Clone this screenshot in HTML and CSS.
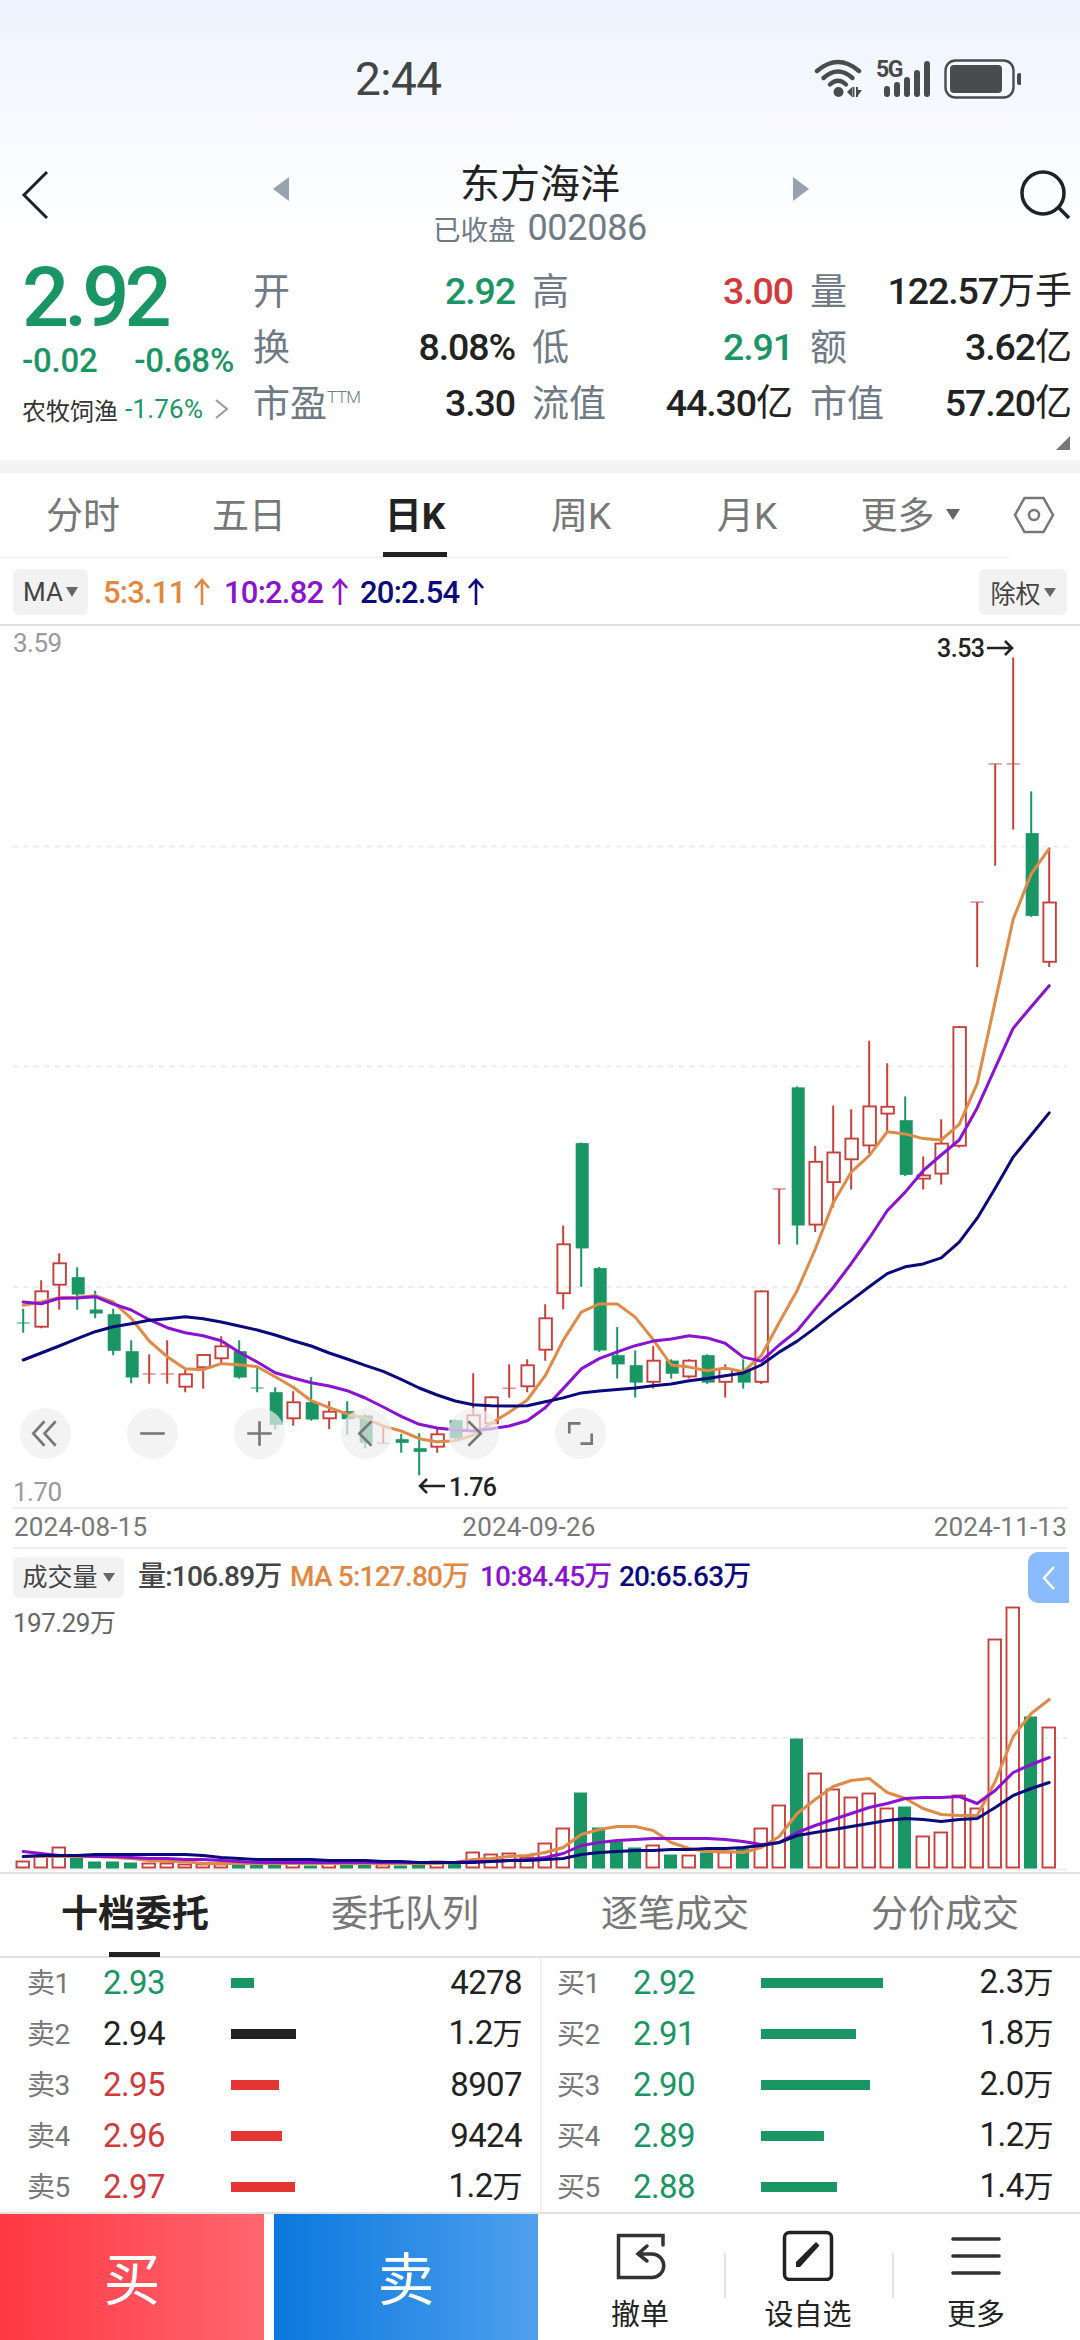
FILE: index.html
```html
<!DOCTYPE html>
<html lang="zh-CN">
<head>
  <meta charset="UTF-8">
  <meta name="viewport" content="width=device-width, initial-scale=1.0">
  <title>东方海洋 002086</title>
  <link rel="stylesheet" href="styles.css">
</head>
<body>
  <div class="top">
    <!-- Status bar -->
    <div class="status">
      <span class="time">2:44</span>
      <svg class="status-icons" width="210" height="44" viewBox="0 0 210 44">
        <g fill="none" stroke="#4a4b4c" stroke-width="4.4" stroke-linecap="round">
          <path d="M6 15Q27 -3 48 15"/>
          <path d="M12.500 22Q27 9 41.500 22"/>
          <path d="M19 28.500Q27 21 35 28.500"/>
        </g>
        <g fill="#4a4b4c">
          <circle cx="27.500" cy="36" r="5"/>
          <path d="M36 36l5-5v10zM41.500 31h2v10h-2zM45 31h2v10h-2zM45 34h6l-5 7z"/>
          <rect x="73" y="30" width="6" height="11" rx="3"/>
          <rect x="83" y="26" width="6" height="15" rx="3"/>
          <rect x="93" y="21" width="6" height="20" rx="3"/>
          <rect x="103" y="14" width="6" height="27" rx="3"/>
          <rect x="113" y="5" width="6" height="36" rx="3"/>
          <rect x="139" y="9" width="52" height="28" rx="4"/>
          <rect x="206" y="17" width="4.500" height="12" rx="2.200"/>
          <text class="net" x="65" y="21">5G</text>
        </g>
        <rect x="134.500" y="4.500" width="68" height="37" rx="10" fill="none" stroke="#4a4b4c" stroke-width="2.400"/>
      </svg>
    </div>

    <!-- Stock title -->
    <div class="header">
      <svg width="30" height="52" viewBox="0 0 30 52"><path d="M28 3L5 26l23 23" fill="none" stroke="#222" stroke-width="3"/></svg>
      <svg class="prev" width="16" height="24" viewBox="0 0 16 24"><path d="M16 0v24L0 12z" fill="#98a2ad"/></svg>
      <div class="name">
        <div class="name-main">东方海洋</div>
        <div class="name-sub">已收盘 <b>002086</b></div>
      </div>
      <svg class="next" width="16" height="24" viewBox="0 0 16 24"><path d="M0 0v24l16-12z" fill="#98a2ad"/></svg>
      <svg class="search" width="52" height="52" viewBox="0 0 52 52"><g fill="none" stroke="#222" stroke-width="3.500"><circle cx="24" cy="24" r="21"/><path d="M39 38l11 11"/></g></svg>
    </div>

    <!-- Quote -->
    <div class="quote">
      <div class="price-box">
        <div class="price">2.92</div>
        <div class="change"><span>-0.02</span><span>-0.68%</span></div>
        <div class="sector">农牧饲渔 <b>-1.76%</b><svg width="14" height="20" viewBox="0 0 14 20"><path d="M1 1l11 9-11 9" fill="none" stroke="#999" stroke-width="2"/></svg></div>
      </div>
      <div class="stats">
        <div class="stat"><span>开</span><b class="green">2.92</b></div>
        <div class="stat"><span>高</span><b class="red">3.00</b></div>
        <div class="stat"><span>量</span><b>122.57<i>万手</i></b></div>
        <div class="stat"><span>换</span><b>8.08%</b></div>
        <div class="stat"><span>低</span><b class="green">2.91</b></div>
        <div class="stat"><span>额</span><b>3.62<i>亿</i></b></div>
        <div class="stat"><span>市盈<sup>TTM</sup></span><b>3.30</b></div>
        <div class="stat"><span>流值</span><b>44.30<i>亿</i></b></div>
        <div class="stat"><span>市值</span><b>57.20<i>亿</i></b></div>
      </div>
    </div>
    <div class="corner"></div>
  </div>

  <div class="period-tabs">
    <div class="tab">分时</div>
    <div class="tab">五日</div>
    <div class="tab active">日K</div>
    <div class="tab">周K</div>
    <div class="tab">月K</div>
    <div class="tab more">更多<i class="caret"></i></div>
    <svg class="setting" width="42" height="40" viewBox="0 0 42 40"><g fill="none" stroke="#777" stroke-width="2.500"><path d="M11.500 3h19L40 20l-9.500 17h-19L2 20z"/><circle cx="21" cy="20" r="5"/></g></svg>
  </div>

  <div class="ma-bar">
    <span class="pill">MA<i class="caret"></i></span>
    <span class="ma orange">5:3.11<svg width="18" height="28" viewBox="0 0 18 28"><path d="M9 27V3M2 10l7-8 7 8"/></svg></span>
    <span class="ma purple">10:2.82<svg width="18" height="28" viewBox="0 0 18 28"><path d="M9 27V3M2 10l7-8 7 8"/></svg></span>
    <span class="ma navy">20:2.54<svg width="18" height="28" viewBox="0 0 18 28"><path d="M9 27V3M2 10l7-8 7 8"/></svg></span>
    <span class="pill right">除权<i class="caret"></i></span>
  </div>

  <div class="kline">
    <svg id="kline" width="1080" height="883"></svg>
    <div class="tools">
      <span><svg viewBox="0 0 50 50"><path d="M24 13L13 25l11 12M35 13L24 25l11 12"/></svg></span>
      <span><svg viewBox="0 0 50 50"><path d="M13 25h24"/></svg></span>
      <span><svg viewBox="0 0 50 50"><path d="M13 25h24M25 13v24"/></svg></span>
      <span><svg viewBox="0 0 50 50"><path d="M30 13L18 25l12 12"/></svg></span>
      <span><svg viewBox="0 0 50 50"><path d="M20 13l12 12-12 12"/></svg></span>
      <span><svg viewBox="0 0 50 50"><path d="M14 25V15h11M25 35h11V25"/></svg></span>
    </div>
  </div>
  <div class="dates"><span>2024-08-15</span><span>2024-09-26</span><span>2024-11-13</span></div>

  <div class="vol-bar">
    <span class="pill">成交量<i class="caret"></i></span>
    <span class="v1">量:106.89万</span>
    <span class="v2 orange">MA 5:127.80万</span>
    <span class="v3 purple">10:84.45万</span>
    <span class="v4 navy">20:65.63万</span>
    <span class="drawer"><svg width="20" height="30" viewBox="0 0 20 30"><path d="M15 4L5 15l10 11" fill="none" stroke="#fff" stroke-width="2.500"/></svg></span>
  </div>
  <div class="volume"><svg id="volume" width="1080" height="269"></svg></div>

  <div class="book-tabs">
    <div class="tab active">十档委托</div>
    <div class="tab">委托队列</div>
    <div class="tab">逐笔成交</div>
    <div class="tab">分价成交</div>
  </div>

  <div class="book">
    <div class="side sell">
      <div class="row green"><span>卖1</span><em>2.93</em><i style="width:23px"></i><b>4278</b></div>
      <div class="row black"><span>卖2</span><em>2.94</em><i style="width:65px"></i><b>1.2<u>万</u></b></div>
      <div class="row red"><span>卖3</span><em>2.95</em><i style="width:48px"></i><b>8907</b></div>
      <div class="row red"><span>卖4</span><em>2.96</em><i style="width:51px"></i><b>9424</b></div>
      <div class="row red"><span>卖5</span><em>2.97</em><i style="width:64px"></i><b>1.2<u>万</u></b></div>
    </div>
    <div class="side buy">
      <div class="row green"><span>买1</span><em>2.92</em><i style="width:122px"></i><b>2.3<u>万</u></b></div>
      <div class="row green"><span>买2</span><em>2.91</em><i style="width:95px"></i><b>1.8<u>万</u></b></div>
      <div class="row green"><span>买3</span><em>2.90</em><i style="width:109px"></i><b>2.0<u>万</u></b></div>
      <div class="row green"><span>买4</span><em>2.89</em><i style="width:63px"></i><b>1.2<u>万</u></b></div>
      <div class="row green"><span>买5</span><em>2.88</em><i style="width:76px"></i><b>1.4<u>万</u></b></div>
    </div>
  </div>

  <div class="bottom">
    <button class="btn-buy">买</button>
    <button class="btn-sell">卖</button>
    <div class="actions">
      <div class="action">
        <svg width="52" height="52" viewBox="0 0 52 52"><path d="M49 16V6.500H4.500v42H38a11.500 11.500 0 0 0 0-23.500H24M33 17l-9 8 9 7" fill="none" stroke="#333" stroke-width="3.500" stroke-linecap="round"/></svg>
        撤单
      </div>
      <div class="action">
        <svg width="52" height="52" viewBox="0 0 52 52"><rect x="2.500" y="3.500" width="47" height="47" rx="5" fill="none" stroke="#222" stroke-width="3.500"/><path d="M14 38v-5l20-20 3.500 3.500L18 38z" fill="#222"/></svg>
        设自选
      </div>
      <div class="action">
        <svg width="52" height="52" viewBox="0 0 52 52"><path d="M3 10h46M3 27h46M3 44h46" fill="none" stroke="#333" stroke-width="3.600" stroke-linecap="round"/></svg>
        更多
      </div>
    </div>
  </div>

  <script src="chart.js"></script>
</body>
</html>
```

FILE: styles.css
```css
* {
  box-sizing: border-box;
}

body {
  margin: 0;
  width: 1080px;
  height: 2340px;
  overflow: hidden;
  background: #fff;
  color: #222;
  font-family: Roboto, "Noto Sans CJK SC", sans-serif;
}

b, i, em, u {
  font-style: normal;
  font-weight: inherit;
  text-decoration: none;
}

svg {
  display: block;
  flex: none;
}

.green { color: #1a9564; }
.red { color: #d23a3a; }
.orange { color: #e2873f; }
.purple { color: #8a12d0; }
.navy { color: #0a0a7c; }

.caret {
  display: inline-block;
  border: 6px solid transparent;
  border-top: 10px solid #666;
  border-bottom: 0;
}

/* ---------- top ---------- */
.top {
  height: 460px;
  background: linear-gradient(#edf4ff 0, #f6f9ff 110px, #fff 240px);
}

.status {
  height: 150px;
  padding: 56px 59px 0 355px;
  display: flex;
  justify-content: space-between;
}

.time {
  font-size: 46px;
  line-height: 46px;
  letter-spacing: -0.5px;
  color: #444;
}

.net {
  font-size: 23px;
  font-weight: 700;
  letter-spacing: -1.5px;
}

.header {
  height: 104px;
  padding: 0 9px 0 19px;
  display: flex;
  align-items: flex-start;
}

.header > svg:first-child { margin-top: 19px; }
.header .prev { margin: 27px 0 0 224px; }
.header .next { margin: 27px 0 0 0; }
.header .search { margin: 19px 0 0 210px; }

.name {
  width: 504px;
  padding: 11px 2px 0 0;
  text-align: center;
}

.name-main {
  font-size: 40px;
  line-height: 48px;
}

.name-sub {
  display: flex;
  justify-content: center;
  align-items: center;
  gap: 12px;
  height: 38px;
  font-size: 27.5px;
  color: #6f7a86;
}

.name-sub b {
  font-size: 36px;
  letter-spacing: -0.3px;
}

.quote {
  display: flex;
}

.price-box {
  width: 232px;
  padding-left: 22px;
  color: #1a9564;
}

.price {
  margin-top: 3px;
  height: 82px;
  line-height: 82px;
  font-size: 83px;
  font-weight: 500;
  letter-spacing: -5px;
}

.change {
  display: flex;
  justify-content: space-between;
  margin-top: 2px;
  height: 40px;
  line-height: 40px;
  font-size: 33px;
  font-weight: 500;
  letter-spacing: -0.2px;
  margin-right: -2px;
}

.sector {
  display: flex;
  align-items: center;
  margin-top: 10px;
  height: 36px;
  font-size: 24px;
  color: #333;
  white-space: nowrap;
}

.sector b {
  margin: 0 12px 0 7px;
  font-size: 26px;
  letter-spacing: 0.2px;
  color: #1a9564;
}

.stats {
  width: 818px;
  margin-left: 21px;
  padding-top: 9px;
  display: grid;
  grid-template-columns: 262px 261px 262px;
  column-gap: 17px;
  grid-auto-rows: 56px;
}

.stat {
  display: flex;
  justify-content: space-between;
  align-items: center;
  font-size: 37px;
  line-height: 56px;
  white-space: nowrap;
}

.stat span {
  position: relative;
  top: 2px;
  color: #6f7a86;
}

.stat sup {
  font-size: 17px;
  font-weight: 300;
  line-height: 1;
  letter-spacing: -0.6px;
  vertical-align: 14px;
}

.stat b {
  font-size: 37.5px;
  font-weight: 500;
  letter-spacing: -1.1px;
}

.stat i {
  font-size: 37px;
  font-weight: 400;
  letter-spacing: 0;
}

.corner {
  margin: 5px 10px 0 auto;
  width: 0;
  border-left: 14px solid transparent;
  border-bottom: 14px solid #777;
}

/* ---------- period tabs ---------- */
.period-tabs {
  height: 98px;
  border-top: 13px solid #f4f4f4;
  display: flex;
  background: linear-gradient(#eee, #eee) 0 84px / 1009px 2px no-repeat;
}

.tab {
  position: relative;
  width: 166px;
  line-height: 87px;
  text-align: center;
  font-size: 37px;
  color: #777;
}

.tab.active {
  color: #222;
  font-weight: 700;
}

.tab.active::after {
  content: "";
  position: absolute;
  left: 50%;
  bottom: 0;
  width: 64px;
  height: 5px;
  margin-left: -32px;
  background: #222;
}

.period-tabs .tab {
  height: 84px;
}

.tab.more {
  width: 160px;
}

.tab.more .caret {
  border-width: 11px 7px 0;
  margin-left: 11px;
  vertical-align: 9px;
}

.setting {
  margin: 22px 0 0 23px;
}

/* ---------- indicator bar ---------- */
.ma-bar {
  height: 68px;
  padding: 11px 13px 0;
  display: flex;
  border-bottom: 2px solid #e0e0e0;
}

.pill {
  display: flex;
  align-items: center;
  justify-content: center;
  gap: 3px;
  width: 75px;
  height: 46px;
  border-radius: 6px;
  background: #f2f2f2;
  font-size: 26px;
  color: #444;
}

.pill.right {
  width: 88px;
  margin-left: auto;
  font-size: 25px;
}

.ma {
  display: flex;
  align-items: center;
  height: 46px;
  font-size: 31px;
  font-weight: 500;
  letter-spacing: -0.8px;
}

.ma svg {
  margin-left: 8px;
  fill: none;
  stroke: currentColor;
  stroke-width: 2.6px;
}

.ma.orange { width: 121px; margin-left: 15px; }
.ma.purple { width: 136px; }

/* ---------- charts ---------- */
.kline {
  position: relative;
  height: 882px;
}

.tools {
  position: absolute;
  left: 20px;
  top: 782px;
  display: flex;
  gap: 56px;
}

.tools span {
  width: 51px;
  height: 51px;
  border-radius: 50%;
  background: rgba(238, 238, 238, 0.7);
}

.tools svg {
  width: 51px;
  height: 51px;
  fill: none;
  stroke: #777;
  stroke-width: 2.6px;
}

.axis {
  font-size: 26px;
  letter-spacing: -0.5px;
  fill: #999;
}

.mark {
  font-size: 25px;
  font-weight: 500;
  letter-spacing: -0.5px;
  fill: #222;
}

.axis.dark {
  fill: #666;
}

.dates {
  margin: 0 13px;
  padding: 0 0 0 1px;
  height: 41px;
  display: flex;
  justify-content: space-between;
  border-bottom: 2px solid #eee;
  font-size: 26px;
  line-height: 39px;
  letter-spacing: 0.2px;
  color: #777;
}

.dates span:nth-child(2) {
  margin-right: 23px;
}

.vol-bar {
  height: 56px;
  padding: 3px 11px 0 13px;
  display: flex;
  font-size: 28px;
  font-weight: 500;
  line-height: 42px;
  letter-spacing: -0.8px;
  white-space: nowrap;
}

.vol-bar .pill {
  width: 111px;
  height: 41px;
  margin-top: 5px;
  gap: 5px;
  font-size: 25px;
  font-weight: 400;
  letter-spacing: 0;
}

.vol-bar .pill .caret,
.pill.right .caret {
  border-width: 9px 6px 0;
}

.v1, .v2, .v3, .v4 {
  margin-top: 4px;
}

.v1 { margin-left: 14px; width: 152px; color: #444; }
.v2 { width: 190px; }
.v3 { width: 139px; }

.drawer {
  width: 41px;
  height: 51px;
  margin-left: auto;
  border-radius: 10px 0 0 10px;
  background: #8abbff;
  display: flex;
  align-items: center;
  justify-content: center;
}

.volume {
  height: 269px;
  border-bottom: 2px solid #e2e2e2;
}

/* ---------- order book ---------- */
.book-tabs {
  display: flex;
  height: 84px;
  border-bottom: 2px solid #e2e2e2;
}

.book-tabs .tab {
  width: 270px;
  height: 83px;
  line-height: 81px;
}

.book-tabs .tab.active::after {
  width: 51px;
  margin-left: -26px;
}

.book {
  display: flex;
  height: 254px;
}

.side {
  width: 540px;
  padding: 0 18px 0 27px;
}

.side.buy {
  padding: 0 27px 0 15px;
  border-left: 2px solid #f0f0f0;
}

.row {
  display: flex;
  align-items: center;
  height: 51px;
  padding-bottom: 2px;
  font-size: 33px;
  letter-spacing: -0.6px;
}

.row span {
  width: 76px;
  padding-bottom: 3px;
  font-size: 28px;
  color: #777;
}

.row em {
  width: 128px;
  font-size: 33px;
}

.row i {
  height: 10px;
  background: currentColor;
}

.row.red i { background: #e53535; }

.row b {
  margin-left: auto;
  line-height: 40px;
  color: #222;
}

.row u {
  font-size: 30px;
}

/* ---------- bottom bar ---------- */
.bottom {
  display: flex;
  height: 129px;
  border-top: 2px solid #e2e2e2;
}

.bottom button {
  width: 264px;
  padding: 0 0 5px;
  border: 0;
  color: #fff;
  font-family: inherit;
  font-size: 57px;
}

.btn-buy {
  background: linear-gradient(90deg, #ff3842, #ff6670);
}

.btn-sell {
  margin-left: 10px;
  background: linear-gradient(90deg, #0a78dd, #4fa0ee);
}

.actions {
  display: flex;
  margin-left: 18px;
}

.action {
  position: relative;
  width: 168px;
  padding-top: 15px;
  display: flex;
  flex-direction: column;
  align-items: center;
  font-size: 29px;
  line-height: 62px;
}

.action svg {
  margin-bottom: 3px;
}

.action + .action::before {
  content: "";
  position: absolute;
  left: 0;
  top: 39px;
  width: 2px;
  height: 45px;
  background: #e2e2e2;
}
```

FILE: chart.js
```js
// [color, high, body top, body bottom, low] in chart pixels
const candles = [
  ['g', 682.7, 697, 697, 706.7], ['r', 654.3, 665.3, 700.7, 702.3], ['r', 627.3, 637.3, 658.7, 683.7],
  ['g', 641.3, 651.7, 668, 683.7], ['g', 664.7, 684, 687, 692.3], ['g', 682.7, 688.7, 724.3, 729.3],
  ['g', 714.3, 725.7, 751, 757.3], ['r', 728.3, 748, 748, 757.7], ['r', 714.3, 748, 748, 757.7],
  ['r', 744, 748.3, 760.7, 766.3], ['r', 728, 729, 741.3, 762.7], ['r', 710.3, 720.3, 732.3, 737.3],
  ['g', 714.3, 725.7, 751, 752.7], ['g', 741.3, 762, 762, 766.3], ['g', 761.3, 766.7, 798.3, 803.3],
  ['r', 765.3, 776.3, 792.3, 799.7], ['g', 751, 776.7, 793, 794.7], ['r', 775.3, 785.7, 792.3, 803.3],
  ['g', 775.3, 785.7, 792.7, 808.7], ['g', 788.3, 790, 816.3, 822.3], ['r', 800.7, 817.3, 817.3, 817.3],
  ['g', 808, 813.7, 816.3, 826.7], ['g', 807.3, 822.7, 825.3, 849.3], ['r', 802.3, 808.3, 820.7, 826.7],
  ['g', 793.3, 794.7, 811.7, 812.7], ['r', 747.3, 789.3, 805, 806.3], ['r', 770.3, 771.3, 797.3, 798.3],
  ['r', 738.3, 762.3, 762.3, 771.7], ['r', 733.3, 739.3, 760.3, 766.3], ['r', 678.3, 692.3, 723.7, 734.7],
  ['r', 599.4, 618.3, 667.2, 683.3], ['g', 516.5, 517.6, 621.9, 660.8], ['g', 641.1, 642.6, 724, 725.8],
  ['g', 701.1, 729.7, 737.9, 752.6], ['g', 724.4, 739.7, 756.1, 771.5], ['r', 719.7, 734.7, 755.8, 762.6],
  ['g', 733.3, 735.1, 747.2, 752.6], ['r', 733.3, 734.7, 750.4, 752.6], ['g', 728.3, 729.7, 756.1, 757.9],
  ['r', 738.3, 743, 755.8, 771.5], ['g', 733.3, 744.7, 756.1, 762.6], ['r', 664.4, 665.4, 755.8, 757.9],
  ['r', 562.9, 562.9, 562.9, 618.6], ['g', 460.4, 461.9, 599, 618.6], ['r', 520.1, 535.8, 598.6, 606.1],
  ['r', 479.4, 526.5, 556.1, 581.5], ['r', 483.3, 512.6, 533.3, 563.6], ['r', 414.7, 480.4, 519.4, 526.9],
  ['r', 437.2, 480.8, 487.6, 505.4], ['g', 470.4, 494.7, 548.3, 550], ['r', 530.4, 549.4, 552.6, 563.6],
  ['r', 493.3, 517.6, 547.6, 558.6], ['r', 400, 401.1, 519.7, 521.5], ['r', 276.1, 276.1, 276.1, 341.1],
  ['r', 137.9, 137.9, 137.9, 239.7], ['r', 31.5, 137.9, 137.9, 203.6], ['g', 165.4, 207.6, 289.4, 290.8],
  ['r', 222.6, 276.5, 335.8, 341.1]
];

const ma5 = [679.3, 676, 671.7, 671.3, 669.7, 676, 692.3, 715, 730.7, 742.7, 743.7, 737.7, 738.7, 740.7, 750.7, 761.3, 774.7, 781.7, 788, 792.3, 800, 805, 812.7, 815.7, 814.7, 809.3, 797.3, 786.3, 774, 749.7, 714.4, 686.1, 677.9, 677.9, 691.1, 713.6, 739, 741.1, 744.7, 741.9, 745.8, 729.7, 696.5, 664.4, 623.3, 576.9, 546.1, 529.7, 505.8, 507.9, 512.6, 514, 498.3, 457.6, 375.4, 293.3, 247.9, 222.6];
const ma10 = [676, 677.7, 672.3, 672, 670.7, 678, 684, 693.7, 701.7, 706.7, 709.7, 714.7, 726.3, 736, 746.7, 752, 756.7, 760, 764.7, 772, 781, 790.3, 798.3, 802, 804, 805, 802.7, 800, 794.7, 781.7, 762.6, 742.9, 732.6, 725.8, 719.7, 715.1, 712.9, 709.7, 711.9, 717.2, 731.1, 735.1, 719, 704.7, 682.9, 661.5, 637.6, 612.2, 584.7, 566.1, 544.7, 529, 514, 481.9, 441.9, 402.2, 380.8, 359.7];
const ma20 = [734, 727, 720, 712.7, 705.7, 700.7, 697.7, 694.3, 692.7, 690.7, 692.7, 696, 700, 704, 709, 714.7, 720, 727, 733, 739.3, 745.3, 753.3, 762, 769, 775, 778.7, 779.7, 780, 779.7, 775.7, 771.9, 766.9, 765.1, 763.6, 761.9, 759.7, 757.9, 754.7, 752.6, 749.7, 746.9, 739, 726.1, 715.1, 701.9, 687.6, 674.4, 660.8, 647.6, 640.8, 637.9, 631.9, 616.1, 592.2, 562.2, 531.1, 509, 486.9];

// volume bars and averages, heights above the base line
const vol = [7, 12, 21, 12, 7, 7, 6, 5, 5, 4, 4, 4, 4, 4, 4, 5, 3, 5, 4, 4, 4, 3, 5, 7, 5, 16, 14, 15, 11, 25, 40, 76, 41, 27, 21, 23, 14, 13, 16, 16, 20, 40, 63, 130, 95, 79, 71, 75, 60, 62, 32, 36, 73, 60, 229, 261, 152, 141];
const vma5 = [12, 12, 12, 12, 12, 11, 10, 8, 7, 7, 5, 5, 5, 5, 5, 5, 5, 5, 5, 5, 5, 5, 5, 5, 6, 9, 10, 12, 13, 16, 21, 34, 39, 42, 42, 38, 26, 20, 17, 17, 16, 21, 32, 55, 69, 82, 88, 90, 76, 70, 60, 54, 53, 53, 87, 132, 155, 169];
const vma10 = [17, 15, 13, 13, 12, 12, 11, 10, 10, 9, 9, 8, 7, 6, 6, 6, 6, 6, 6, 6, 6, 6, 6, 6, 6, 7, 7, 8, 9, 11, 15, 23, 26, 28, 29, 30, 30, 30, 30, 29, 27, 24, 26, 36, 43, 49, 55, 61, 65, 70, 71, 71, 72, 65, 78, 96, 104, 111];
const vma20 = [12, 13, 13, 13, 14, 14, 14, 14, 14, 14, 13, 11, 10, 9, 9, 9, 9, 8, 8, 8, 7, 7, 6, 6, 6, 6, 7, 8, 8, 9, 10, 14, 16, 17, 18, 18, 19, 19, 20, 20, 21, 23, 26, 33, 36, 39, 42, 45, 48, 50, 49, 47, 49, 50, 61, 73, 80, 86];

const GREEN = '#1a9564';
const RED = '#c8403c';
const x = i => 23.2 + i * 18;

function hline(y, dash) {
  return `<path d="M13 ${y}H1067" stroke="#ebeeee" stroke-width="2" ${dash ? 'stroke-dasharray="5.4 5"' : ''}/>`;
}

function curve(ys, color) {
  const pts = ys.map((y, i) => `${x(i).toFixed(1)},${y}`).join(' ');
  return `<polyline points="${pts}" fill="none" stroke="${color}" stroke-width="3" stroke-linejoin="round" stroke-linecap="round"/>`;
}

function drawKline() {
  let out = hline(220.500, true) + hline(440.500, true) + hline(661, true) + hline(882, false);
  candles.forEach(([c, hi, top, bot, lo], i) => {
    const cx = x(i);
    const color = c === 'g' ? GREEN : RED;
    if (top === bot) {
      out += `<path d="M${cx - 6.500} ${top}h13" stroke="${color}" stroke-width="1.500" opacity=".6"/>`;
      out += `<path d="M${cx} ${hi}V${lo}" stroke="${color}" stroke-width="2"/>`;
    } else if (c === 'g') {
      out += `<path d="M${cx} ${hi}V${lo}" stroke="${color}" stroke-width="2"/>`;
      out += `<rect x="${cx - 5.500}" y="${top - .5}" width="13" height="${bot - top + 1}" fill="${color}"/>`;
    } else {
      out += `<path d="M${cx} ${hi}V${top}M${cx} ${bot}V${lo}" stroke="${color}" stroke-width="2"/>`;
      out += `<rect x="${cx - 5.800}" y="${top}" width="12.500" height="${bot - top}" fill="none" stroke="${color}" stroke-width="1.900"/>`;
    }
  });
  out += curve(ma5, '#e08a48') + curve(ma10, '#8a12d0') + curve(ma20, '#0a0a7c');
  out += '<text class="axis" x="13" y="25.500">3.59</text><text class="axis" x="13" y="875">1.70</text>';
  out += '<text class="mark" x="937" y="31">3.53</text><text class="mark" x="449" y="870">1.76</text>';
  out += '<path d="M987 22h25M1005 15l7 7-7 7M445 860h-25M427 853l-7 7 7 7" fill="none" stroke="#222" stroke-width="2.500"/>';
  document.getElementById('kline').innerHTML = out;
}

function drawVolume() {
  const base = 263.500;
  let out = hline(133, true) + hline(264.500, false);
  vol.forEach((h, i) => {
    const cx = x(i) - 0.700;
    if (i > 0 && candles[i][0] === 'g') {
      out += `<rect x="${cx - 6.500}" y="${base - h}" width="13" height="${h}" fill="${GREEN}"/>`;
    } else {
      out += `<rect x="${cx - 6}" y="${base - h}" width="12.500" height="${h - 1}" fill="none" stroke="${RED}" stroke-width="1.900"/>`;
    }
  });
  out += curve(vma5.map(h => base - h), '#e08a48');
  out += curve(vma10.map(h => base - h), '#8a12d0');
  out += curve(vma20.map(h => base - h), '#0a0a7c');
  out += '<text class="axis dark" x="13" y="27">197.29万</text>';
  document.getElementById('volume').innerHTML = out;
}

drawKline();
drawVolume();
```
